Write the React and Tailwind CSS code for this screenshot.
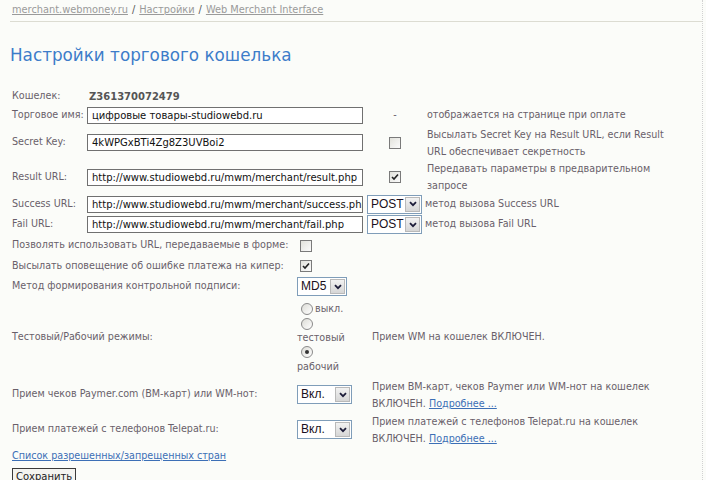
import React from "react";

// ── Small form controls in the old Windows look ────────────────
function Check({ checked = false }) {
  return (
    <span className="inline-flex h-[12px] w-[12px] items-center justify-center border border-[#7a7a7a] bg-gradient-to-br from-[#e2e2dc] to-[#fbfbfb]">
      {checked && (
        <svg width="8" height="8" viewBox="0 0 8 8">
          <path d="M1 4 L3 6 L7 1.5" fill="none" stroke="#222" strokeWidth="1.6" />
        </svg>
      )}
    </span>
  );
}

function Radio({ checked = false }) {
  return (
    <span className="inline-flex h-[12px] w-[12px] shrink-0 items-center justify-center rounded-full border border-[#8a8a8a] bg-gradient-to-br from-[#dcdcd6] to-[#ffffff]">
      {checked && <span className="h-[4px] w-[4px] rounded-full bg-[#333]" />}
    </span>
  );
}

function Select({ value, width }) {
  return (
    <span
      className={`inline-flex h-[19px] shrink-0 items-stretch border border-[#7f9db9] bg-white ${width}`}
    >
      <span className="flex-1 overflow-hidden pl-[3px] font-['Liberation_Sans',Arial,sans-serif] text-[12px] leading-[17px] text-[#1a1020]">
        {value}
      </span>
      <span className="m-px flex w-[15px] items-center justify-center border border-[#b9b9b9] bg-gradient-to-b from-[#f2f2f2] to-[#d6d6d6]">
        <svg width="8" height="6" viewBox="0 0 8 6">
          <path d="M1 1.2 L4 4.2 L7 1.2" fill="none" stroke="#1d1d3a" strokeWidth="1.8" />
        </svg>
      </span>
    </span>
  );
}

function TextInput({ value }) {
  return (
    <div className="h-[17px] w-[276px] overflow-hidden whitespace-nowrap border border-[#707070] bg-white pl-[4px] text-[10px] leading-[15px] text-[#111]">
      {value}
    </div>
  );
}

export default function App() {
  return (
    <div className="min-h-[480px] w-[706px] bg-[#fbfcf9] font-['DejaVu_Sans',Verdana,sans-serif] text-[9.6px] text-[#695f6a]">
      <div className="w-[703px] border-r border-dotted border-[#d2d2d2] pb-[10px]">
        {/* breadcrumbs */}
        <div className="ml-[10px] flex h-[22px] items-center gap-[4px] border-b border-[#dcdcd2] pl-[2px] text-[9.8px] text-[#9a9a9a]">
          <a className="underline">merchant.webmoney.ru</a>
          <span className="text-[#555]">/</span>
          <a className="underline">Настройки</a>
          <span className="text-[#555]">/</span>
          <a className="underline">Web Merchant Interface</a>
        </div>

        <h1 className="mt-[22px] pl-[10px] text-[16.8px] leading-[22px] text-[#3d7cc9]">
          Настройки торгового кошелька
        </h1>

        {/* wallet settings */}
        <div className="mt-[20px] grid grid-cols-[75px_280px_58px_1fr] whitespace-nowrap pl-[12px]">
          <div className="flex h-[20px] items-center">Кошелек:</div>
          <div className="col-span-3 flex items-center pl-[2px] text-[10px] font-bold text-[#555]">
            Z361370072479
          </div>

          <div className="flex h-[19px] items-center">Торговое имя:</div>
          <div className="flex items-center">
            <TextInput value="цифровые товары-studiowebd.ru" />
          </div>
          <div className="flex items-center justify-center pr-[2px]">-</div>
          <div className="flex items-center pl-[2px]">отображается на странице при оплате</div>

          <div className="flex h-[35px] items-center">Secret Key:</div>
          <div className="flex items-center">
            <TextInput value="4kWPGxBTi4Zg8Z3UVBoi2" />
          </div>
          <div className="flex items-center justify-center pr-[2px]">
            <Check />
          </div>
          <div className="flex items-center pl-[2px] leading-[17px]">
            Высылать Secret Key на Result URL, если Result
            <br />
            URL обеспечивает секретность
          </div>

          <div className="flex h-[34px] items-center">Result URL:</div>
          <div className="flex items-center">
            <TextInput value="http://www.studiowebd.ru/mwm/merchant/result.php" />
          </div>
          <div className="flex items-center justify-center pr-[2px]">
            <Check checked />
          </div>
          <div className="flex items-center pl-[2px] leading-[17px]">
            Передавать параметры в предварительном
            <br />
            запросе
          </div>

          <div className="flex h-[20px] items-center">Success URL:</div>
          <div className="flex items-center">
            <TextInput value="http://www.studiowebd.ru/mwm/merchant/success.php" />
          </div>
          <div className="col-span-2 flex items-center gap-[3px]">
            <Select value="POST" width="w-[55px]" />
            <span>метод вызова Success URL</span>
          </div>

          <div className="flex h-[21px] items-center">Fail URL:</div>
          <div className="flex items-center">
            <TextInput value="http://www.studiowebd.ru/mwm/merchant/fail.php" />
          </div>
          <div className="col-span-2 flex items-center gap-[3px]">
            <Select value="POST" width="w-[55px]" />
            <span>метод вызова Fail URL</span>
          </div>
        </div>

        {/* payment options */}
        <div className="grid grid-cols-[285px_75px_1fr] whitespace-nowrap pl-[12px]">
          <div className="flex h-[21px] items-center">Позволять использовать URL, передаваемые в форме:</div>
          <div className="col-span-2 flex items-center pl-[3px]">
            <Check />
          </div>

          <div className="flex h-[20px] items-center">Высылать оповещение об ошибке платежа на кипер:</div>
          <div className="col-span-2 flex items-center pl-[3px]">
            <Check checked />
          </div>

          <div className="flex h-[21px] items-center">Метод формирования контрольной подписи:</div>
          <div className="col-span-2 flex items-center">
            <Select value="MD5" width="w-[50px]" />
          </div>

          <div className="flex h-[80px] items-center">Тестовый/Рабочий режимы:</div>
          <div className="flex flex-col justify-center pt-[2px]">
            <div className="flex h-[15px] items-center gap-[2px] pl-[4px]">
              <Radio />
              <span>выкл.</span>
            </div>
            <div className="flex h-[15px] items-center pl-[4px]">
              <Radio />
            </div>
            <div className="flex h-[13px] items-center">тестовый</div>
            <div className="flex h-[15px] items-center pl-[4px]">
              <Radio checked />
            </div>
            <div className="flex h-[15px] items-center">рабочий</div>
          </div>
          <div className="flex items-center">Прием WM на кошелек ВКЛЮЧЕН.</div>

          <div className="flex h-[35px] items-center">Прием чеков Paymer.com (ВМ-карт) или WM-нот:</div>
          <div className="flex items-center">
            <Select value="Вкл." width="w-[55px]" />
          </div>
          <div className="flex items-center leading-[17px]">
            <div>
              Прием ВМ-карт, чеков Paymer или WM-нот на кошелек
              <br />
              ВКЛЮЧЕН.{" "}
              <a className="text-[#3c6fb6] underline">Подробнее ...</a>
            </div>
          </div>

          <div className="flex h-[35px] items-center">Прием платежей с телефонов Telepat.ru:</div>
          <div className="flex items-center">
            <Select value="Вкл." width="w-[55px]" />
          </div>
          <div className="flex items-center leading-[17px]">
            <div>
              Прием платежей с телефонов Telepat.ru на кошелек
              <br />
              ВКЛЮЧЕН.{" "}
              <a className="text-[#3c6fb6] underline">Подробнее ...</a>
            </div>
          </div>
        </div>

        <div className="flex h-[18px] items-center pl-[12px]">
          <a className="text-[#3c6fb6] underline">Список разрешенных/запрещенных стран</a>
        </div>

        <div className="mt-[3px] pl-[12px]">
          <button className="h-[18px] border border-[#3a3a3a] bg-[#f4f4f0] px-[3px] text-[10px] leading-[14px] text-[#222]">
            Сохранить
          </button>
        </div>
      </div>
    </div>
  );
}
